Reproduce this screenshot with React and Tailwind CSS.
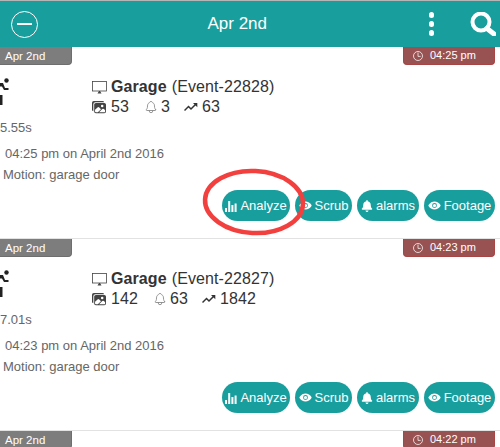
import React from 'react';
import { FaBell } from 'react-icons/fa';
import { IoNotificationsOutline, IoTimeOutline, IoEye, IoImages } from 'react-icons/io5';

const events = [
  { id: 22828, time: '04:25 pm', duration: '5.55s', frames: 53, alarms: 3, score: 63 },
  { id: 22827, time: '04:23 pm', duration: '7.01s', frames: 142, alarms: 63, score: 1842 },
];

const RunnerIcon = () => (
  <svg width="10" height="28" viewBox="0 0 10 28" className="text-[#222]" fill="currentColor">
    <circle cx="6.5" cy="2.5" r="2.2" />
    <path d="M0 5h3l2 5h3.500v2H4L2 8.500H0z" />
    <path d="M0 17h2.500v10H0z" />
  </svg>
);

const MonitorIcon = () => (
  <svg width="15" height="15" viewBox="0 0 15 15" fill="none" className="text-[#444] mr-[4px]">
    <rect x="0.500" y="1.500" width="14" height="9.500" stroke="currentColor" strokeWidth="0.800" />
    <path d="M5.500 13.500h4L8 11H7z" fill="currentColor" />
  </svg>
);

const BarsIcon = () => (
  <svg width="12" height="12" viewBox="0 0 12 12" fill="currentColor">
    <rect x="0" y="8" width="2" height="4" />
    <rect x="3.200" y="1" width="2" height="11" />
    <rect x="6.400" y="5" width="2" height="7" />
    <rect x="9.600" y="3.500" width="2" height="8.500" />
  </svg>
);

const TrendIcon = () => (
  <svg width="14" height="10" viewBox="0 0 14 10" fill="none" stroke="#333" strokeWidth="1.500">
    <path d="M0.500 8.500l4-4 2.500 2.500 5-5" />
    <path d="M9 1h4.300v4.300z" fill="#333" stroke="none" />
  </svg>
);

const SearchIcon = () => (
  <svg width="26" height="24" viewBox="0 0 26 24" fill="none" stroke="white" className="mr-[4px]">
    <circle cx="11" cy="10" r="8.500" strokeWidth="4" />
    <path d="M17 16.500L24 22" strokeWidth="5" strokeLinecap="round" />
  </svg>
);

const DateTags = ({ time }) => (
  <div className="flex justify-between items-start">
    <div className="w-[72px] h-[18px] bg-[#7d7d7d] border-r border-b border-[#6e6e6e] rounded-br-[4px] text-white text-[11.500px] leading-[18px] pl-[5px]">
      Apr 2nd
    </div>
    <div className="w-[92px] h-[18px] mr-[5px] bg-[#985252] border border-t-0 border-[#a84444] rounded-b-[4px] text-white text-[11px] flex items-center gap-[6px] pl-[8px]">
      <IoTimeOutline className="w-[12px] h-[12px]" />
      <span>{time}</span>
    </div>
  </div>
);

const ActionButton = ({ icon, label, width }) => (
  <div className={`${width} h-[31px] bg-[#199e9e] rounded-full text-white text-[13px] flex items-center justify-center gap-[3px]`}>
    {icon}
    <span>{label}</span>
  </div>
);

const EventCard = ({ event }) => (
  <div className="h-[192px] border-b border-[#e2e2e2] flex flex-col">
    <DateTags time={event.time} />
    <div className="flex h-[47px] mt-[12px]">
      <div className="w-[92px] shrink-0 mt-[1px]">
        <RunnerIcon />
      </div>
      <div>
        <div className="flex items-center h-[20px] text-[16px] text-[#333] tracking-[0.1px]">
          <MonitorIcon />
          <span className="font-bold mr-[5px]">Garage</span>
          <span>(Event-{event.id})</span>
        </div>
        <div className="flex items-center h-[20px] text-[16px] text-[#333] tracking-[0.1px]">
          <span className="flex items-center gap-[5px] mr-[15px]">
            <IoImages className="w-[14px] h-[14px] text-[#444]" />
            {event.frames}
          </span>
          <span className="flex items-center gap-[3px] mr-[14px]">
            <IoNotificationsOutline className="w-[14px] h-[14px] text-[#888]" />
            {event.alarms}
          </span>
          <span className="flex items-center gap-[4px]">
            <TrendIcon />
            {event.score}
          </span>
        </div>
      </div>
    </div>
    <div className="text-[13px] leading-[16px] text-[#666] -mt-[4px]">{event.duration}</div>
    <div className="text-[13px] leading-[16px] text-[#666] pl-[5px] mt-[10px]">
      {event.time} on April 2nd 2016
    </div>
    <div className="text-[13px] leading-[16px] text-[#666] pl-[3px] mt-[5px]">Motion: garage door</div>
    <div className="flex justify-end gap-[5px] pr-[5px] mt-[7px]">
      <ActionButton label="Analyze" width="w-[68px]" icon={<BarsIcon />} />
      <ActionButton label="Scrub" width="w-[57px]" icon={<IoEye className="w-[13px] h-[13px]" />} />
      <ActionButton label="alarms" width="w-[62px]" icon={<FaBell className="w-[12px] h-[12px]" />} />
      <ActionButton label="Footage" width="w-[71px]" icon={<IoEye className="w-[13px] h-[13px]" />} />
    </div>
  </div>
);

export default function App() {
  return (
    <div className="relative w-[500px] h-[447px] overflow-hidden bg-white font-['Liberation_Sans',Arial,sans-serif]">
      <div className="h-[47px] border-t border-[#b5b5b5] bg-[#199e9e] flex items-center text-white">
        <div className="w-[27px] h-[27px] ml-[11px] rounded-full border-[1.500px] border-white flex items-center justify-center">
          <div className="w-[15px] h-[1.500px] bg-white" />
        </div>
        <div className="flex-1 text-center text-[17px] pl-[8px]">Apr 2nd</div>
        <div className="flex flex-col gap-[3.500px] mr-[36px]">
          <div className="w-[5.500px] h-[5.500px] rounded-full bg-white" />
          <div className="w-[5.500px] h-[5.500px] rounded-full bg-white" />
          <div className="w-[5.500px] h-[5.500px] rounded-full bg-white" />
        </div>
        <SearchIcon />
      </div>
      {events.map((event) => (
        <EventCard key={event.id} event={event} />
      ))}
      <DateTags time="04:22 pm" />
      {/* hand drawn circle around the Analyze button */}
      <svg className="absolute left-[200px] top-[165px]" width="110" height="75" viewBox="0 0 110 75" fill="none">
        <ellipse cx="54" cy="37" rx="49" ry="31" stroke="#f2403f" strokeWidth="4.500" transform="rotate(3 54 37)" />
      </svg>
    </div>
  );
}
